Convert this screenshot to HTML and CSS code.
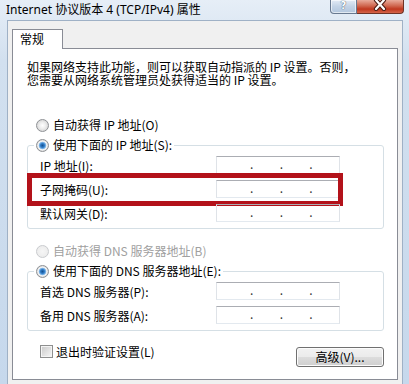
FILE: index.html
```html
<!DOCTYPE html>
<html lang="zh-CN">
<head>
    <meta charset="UTF-8">
    <meta name="viewport" content="width=device-width, initial-scale=1.0">
    <link rel="stylesheet" href="styles.css">
    <title>Internet 协议版本 4 (TCP/IPv4) 属性</title>
</head>
<body>
    <div class="window">
        <div class="titlebar">
            <span class="title">Internet 协议版本 4 (TCP/IPv4) 属性</span>
            <div class="caption-buttons">
                <span class="btn-help">?</span>
                <span class="btn-close">
                    <svg width="14" height="11" viewBox="0 0 14 11">
                        <path d="M3 0 L11 9 M11 0 L3 9" stroke="#4a1a12" stroke-width="4.2" stroke-linecap="round"/>
                        <path d="M3 0 L11 9 M11 0 L3 9" stroke="#fff" stroke-width="2.2" stroke-linecap="round"/>
                    </svg>
                </span>
            </div>
        </div>

        <div class="client">
            <div class="tabs">
                <span class="tab">常规</span>
            </div>

            <div class="panel">
                <p class="intro">如果网络支持此功能，则可以获取自动指派的 IP 设置。否则，<br>您需要从网络系统管理员处获得适当的 IP 设置。</p>

                <div class="option first"><span class="radio"></span>自动获得 IP 地址(O)</div>
                <fieldset class="group">
                    <legend class="option"><span class="radio checked"></span>使用下面的 IP 地址(S):</legend>
                    <div class="row">
                        <span>IP 地址(I):</span>
                        <div class="ip"><i>.</i><i>.</i><i>.</i></div>
                    </div>
                    <div class="row">
                        <span>子网掩码(U):</span>
                        <div class="ip"><i>.</i><i>.</i><i>.</i></div>
                        <span class="mark"></span>
                    </div>
                    <div class="row">
                        <span>默认网关(D):</span>
                        <div class="ip"><i>.</i><i>.</i><i>.</i></div>
                    </div>
                </fieldset>

                <div class="option second disabled"><span class="radio"></span>自动获得 DNS 服务器地址(B)</div>
                <fieldset class="group">
                    <legend class="option"><span class="radio checked"></span>使用下面的 DNS 服务器地址(E):</legend>
                    <div class="row">
                        <span>首选 DNS 服务器(P):</span>
                        <div class="ip"><i>.</i><i>.</i><i>.</i></div>
                    </div>
                    <div class="row">
                        <span>备用 DNS 服务器(A):</span>
                        <div class="ip"><i>.</i><i>.</i><i>.</i></div>
                    </div>
                </fieldset>

                <div class="footer">
                    <div class="check-row"><span class="checkbox"></span>退出时验证设置(L)</div>
                    <button class="btn">高级(V)...</button>
                </div>
            </div>
        </div>
    </div>
</body>
</html>
```

FILE: styles.css
```css
* {
    box-sizing: border-box;
}

body {
    margin: 0;
    width: 409px;
    height: 384px;
    overflow: hidden;
    font-family: "Noto Sans CJK SC", "Noto Sans", sans-serif;
    font-size: 12px;
    color: #000;
}

.window {
    height: 384px;
    display: flex;
    flex-direction: column;
    background: linear-gradient(#e6eef7, #d2e0ef 60px, #c6d8ec);
}

/* title bar */
.titlebar {
    height: 20px;
    display: flex;
    justify-content: space-between;
    align-items: flex-start;
}

.title {
    padding-left: 6px;
    line-height: 19px;
    font-family: "Noto Sans", "Noto Sans CJK SC", sans-serif;
    font-size: 12px;
}

.caption-buttons {
    display: flex;
    margin-right: 5px;
}

.btn-help {
    width: 27px;
    height: 14px;
    border: 1px solid #687990;
    border-top: none;
    border-radius: 0 0 0 4px;
    background: linear-gradient(#e3ebf5, #c3d3e6 50%, #b2c6dd);
    box-shadow: inset 0 0 0 1px rgba(255, 255, 255, 0.6);
    text-align: center;
    font-family: "DejaVu Sans", sans-serif;
    font-weight: bold;
    font-size: 10px;
    line-height: 12px;
    color: #fff;
    text-shadow: 0 0 1px #4f5f74, 0 0 1px #4f5f74;
}

.btn-close {
    width: 47px;
    height: 14px;
    border: 1px solid #6e3326;
    border-top: none;
    border-left: none;
    border-radius: 0 0 4px 0;
    background: linear-gradient(#e9ab9b, #d0674f 45%, #c0381f 70%, #d4644a);
    display: flex;
    justify-content: center;
    align-items: flex-start;
}

/* client area */
.client {
    flex: 1;
    margin: 0 6px 0 7px;
    border: 1px solid #9fb1c6;
    border-bottom: none;
    background: #f0f0f0;
    padding: 8px 4px 0 4px;
}

.tabs {
    display: flex;
    height: 20px;
    margin-bottom: -1px;
}

.tab {
    position: relative;
    z-index: 1;
    width: 51px;
    height: 20px;
    border: 1px solid #898c95;
    border-bottom: none;
    background: #fff;
    padding-left: 7px;
    line-height: 18px;
}

.panel {
    background: #fff;
    border: 1px solid #898c95;
    padding: 11px 13px 12px 14px;
}

.intro {
    margin: 0;
    line-height: 13px;
}

/* radio options */
.option {
    display: flex;
    align-items: center;
    gap: 4px;
    height: 14px;
    line-height: 14px;
}

.option.first {
    margin: 32px 0 0 9px;
}

.option.second {
    margin: 15px 0 0 9px;
}

.disabled {
    color: #a0a0a0;
}

.radio {
    width: 13px;
    height: 13px;
    border-radius: 50%;
    border: 1px solid #8e9195;
    background: radial-gradient(circle, #ffffff 0, #eeeeee 3px, #d6d6d6 6px);
}

.radio.checked {
    background: radial-gradient(circle, #16508f 0, #2f7cc8 2px, #8fc0ec 3.5px, #f6f6f6 4.2px, #e6e6e6 5px, #d2d2d2 6px);
}

.disabled .radio {
    border-color: #c9cbce;
    background: radial-gradient(circle, #f6f6f6 0, #ececec 6px);
}

/* group boxes */
.group {
    margin: 6px 0 0 0;
    padding: 4px 0 6px 6px;
    border: 1px solid #d5dfe5;
    border-radius: 3px;
    min-width: 0;
}

.group legend {
    padding: 0 2px;
}

.row {
    position: relative;
    display: flex;
    justify-content: space-between;
    align-items: center;
    height: 18px;
    padding: 0 43px 0 6px;
}

.row + .row {
    margin-top: 6px;
}

.ip {
    width: 124px;
    height: 18px;
    display: flex;
    padding-left: 33px;
    border: 1px solid #dfe3e8;
    border-top-color: #abadb3;
    border-bottom-color: #e3e9ef;
}

.ip i {
    font-style: normal;
    width: 4px;
    margin-right: 26px;
    line-height: 14px;
    color: #333;
}

/* red highlight drawn over the subnet mask row */
.mark {
    position: absolute;
    left: -7px;
    top: -7px;
    width: 316px;
    height: 33px;
    border: 5px solid #b3121a;
}

/* footer */
.footer {
    display: flex;
    justify-content: space-between;
    align-items: flex-start;
    margin-top: 14px;
    padding-left: 13px;
}

.check-row {
    display: flex;
    align-items: center;
    gap: 3px;
    height: 13px;
    line-height: 13px;
}

.checkbox {
    width: 13px;
    height: 13px;
    border: 1px solid #8e8f8f;
    background: linear-gradient(135deg, #c9c9c9, #f7f7f7);
    box-shadow: inset 0 0 0 1px #f4f4f4;
}

.btn {
    margin-top: 2px;
    width: 88px;
    height: 20px;
    padding: 0;
    border: 1px solid #707070;
    border-radius: 3px;
    background: linear-gradient(#f2f2f2, #ebebeb 50%, #dddddd 50%, #cfcfcf);
    box-shadow: inset 0 0 0 1px #fcfcfc;
    font-family: "Noto Sans CJK SC", "Noto Sans", sans-serif;
    font-size: 12px;
    line-height: 16px;
    color: #000;
}
```
